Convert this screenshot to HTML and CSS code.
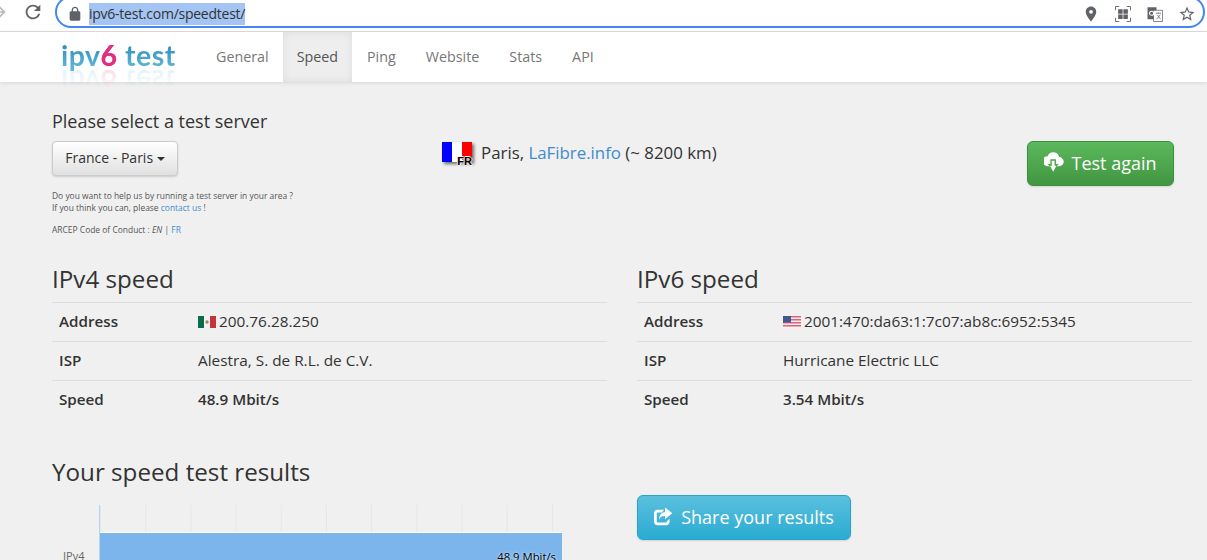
FILE: index.html
```html
<!DOCTYPE html>
<html lang="en">
<head>
  <meta charset="UTF-8" />
  <title>IPv6 speed test</title>
  <link rel="stylesheet" href="styles.css">
</head>
<body>
  <div class="toolbar">
    <svg class="tool-back" viewBox="0 0 24 24"><path d="M12 4l-1.41 1.41L16.17 11H4v2h12.17l-5.58 5.59L12 20l8-8z"/></svg>
    <svg class="tool-reload" viewBox="0 0 24 24"><path d="M17.65 6.35A7.958 7.958 0 0 0 12 4c-4.42 0-7.99 3.58-7.99 8s3.57 8 7.99 8c3.73 0 6.84-2.55 7.73-6h-2.08A5.99 5.99 0 0 1 12 18c-3.31 0-6-2.69-6-6s2.69-6 6-6c1.66 0 3.14.69 4.22 1.78L13 11h7V4l-2.35 2.35z"/></svg>
    <div class="omnibox">
      <svg class="tool-lock" viewBox="0 0 24 24"><path d="M18 8h-1V6c0-2.76-2.24-5-5-5S7 3.24 7 6v2H6c-1.1 0-2 .9-2 2v10c0 1.1.9 2 2 2h12c1.1 0 2-.9 2-2V10c0-1.1-.9-2-2-2zM9 6c0-1.66 1.34-3 3-3s3 1.34 3 3v2H9V6z"/></svg>
      <span class="url">ipv6-test.com/speedtest/</span>
      <div class="omni-icons">
        <svg viewBox="0 0 24 24"><path d="M12 2C8.13 2 5 5.13 5 9c0 5.25 7 13 7 13s7-7.75 7-13c0-3.87-3.13-7-7-7zm0 9.5a2.5 2.5 0 1 1 0-5 2.5 2.500 0 0 1 0 5z"/></svg>
        <svg viewBox="0 0 24 24"><path d="M2 7V2h5M17 2h5v5M22 17v5h-5M7 22H2v-5" fill="none" stroke="#5f6368" stroke-width="1.200"/><path d="M5.500 5.500h6v6h-6zM12.500 5.500h6v6h-6zM5.500 12.500h6v6h-6zM12.500 12.500h6v6h-6z"/></svg>
        <svg viewBox="0 0 24 24"><path d="M2 3h12v16H2z"/><path d="M10 7h12v15H10z" fill="#fff" stroke="#5f6368"/><circle cx="7.500" cy="11" r="2.800" fill="none" stroke="#fff" stroke-width="1.400"/><path d="M13 11h7M16.500 10v1.500M14 19l5-6M15 13l4.500 6" fill="none" stroke="#5f6368"/></svg>
        <svg viewBox="0 0 24 24"><path d="M22 9.240l-7.190-.62L12 2 9.190 8.630 2 9.240l5.460 4.730L5.820 21 12 17.270 18.180 21l-1.630-7.030L22 9.240zM12 15.400l-3.760 2.270 1-4.280-3.320-2.880 4.380-.38L12 6.100l1.710 4.040 4.380.38-3.320 2.880 1 4.280L12 15.400z"/></svg>
      </div>
    </div>
  </div>

  <nav class="navbar">
    <a class="logo">ipv<span class="logo-six">6</span> test</a>
    <a class="nav-item">General</a>
    <a class="nav-item active">Speed</a>
    <a class="nav-item">Ping</a>
    <a class="nav-item">Website</a>
    <a class="nav-item">Stats</a>
    <a class="nav-item">API</a>
  </nav>

  <main class="page">
    <section class="server-row">
      <div>
        <div class="server-title">Please select a test server</div>
        <button class="btn-server">France - Paris <span class="caret"></span></button>
        <p class="small-note">Do you want to help us by running a test server in your area ?<br>If you think you can, please <a>contact us</a> !</p>
        <p class="small-note">ARCEP Code of Conduct : <a class="lang-en">EN</a> | <a>FR</a></p>
      </div>
      <div class="server-info">
        <span class="flag-fr"><i class="blue"></i><i class="white"></i><i class="red"></i><b>FR</b></span>
        <span>Paris, <a>LaFibre.info</a> (~ 8200 km)</span>
      </div>
      <button class="btn-big btn-green">
        <svg viewBox="2 0 24 24"><path d="M18.500 5.500A6.500 6.500 0 0 0 6 4.500 5 5 0 0 0 6 15.500h12.500a5 5 0 0 0 0-10z"/><path d="M9 8h6v5h3l-6 7-6-7h3z" fill="#4aa44a"/><path d="M10.500 9.500h3V15h2L12 21.500 8.500 15h2z"/></svg>
        Test again
      </button>
    </section>

    <section class="two-cols">
      <div>
        <h2>IPv4 speed</h2>
        <div class="info-row"><b>Address</b><span><svg class="flag" viewBox="0 0 18 12"><path fill="#0b6b4f" d="M0 0h6v12H0z"/><path fill="#f2f2ee" d="M6 0h6v12H6z"/><path fill="#c8323f" d="M12 0h6v12h-6z"/><circle cx="9" cy="6" r="1.700" fill="#9a8a5a"/></svg>200.76.28.250</span></div>
        <div class="info-row"><b>ISP</b><span>Alestra, S. de R.L. de C.V.</span></div>
        <div class="info-row"><b>Speed</b><b>48.9 Mbit/s</b></div>
      </div>
      <div>
        <h2>IPv6 speed</h2>
        <div class="info-row"><b>Address</b><span><svg class="flag" viewBox="0 0 18 12"><path fill="#f4f0f0" d="M0 0h18v12H0z"/><path fill="#e0607a" d="M0 0h18v1.500H0zM0 3h18v1.500H0zM0 6h18v1.500H0zM0 9h18v1.500H0z"/><path fill="#3f5a8c" d="M0 0h8v6.500H0z"/></svg>2001:470:da63:1:7c07:ab8c:6952:5345</span></div>
        <div class="info-row"><b>ISP</b><span>Hurricane Electric LLC</span></div>
        <div class="info-row"><b>Speed</b><b>3.54 Mbit/s</b></div>
      </div>
    </section>

    <section class="two-cols results">
      <div>
        <h2 class="results-title">Your speed test results</h2>
        <div class="chart">
          <span class="chart-label">IPv4</span>
          <div class="chart-plot">
            <div class="chart-bar"><span>48.9 Mbit/s</span></div>
          </div>
        </div>
      </div>
      <div class="share-col">
        <button class="btn-big btn-blue">
          <svg viewBox="3 0 24 24"><path d="M14 4H7a4 4 0 0 0-4 4v9a4 4 0 0 0 4 4h9a4 4 0 0 0 4-4v-3l-3 2.500V17a1 1 0 0 1-1 1H7a1 1 0 0 1-1-1V8a1 1 0 0 1 1-1h4.500z"/><path d="M15 1.500L23 8l-8 6.500V11c-3.500 0-5.500 1.200-6.500 4 0-5 2.500-8 6.500-8.500z"/></svg>
          Share your results
        </button>
      </div>
    </section>
  </main>
</body>
</html>
```

FILE: styles.css
```css
html, body {
  height: 560px;
  overflow: hidden;
}

body {
  margin: 0;
  font-family: "Open Sans", sans-serif;
  font-size: 14px;
  color: #333;
  background-color: #f0f0f0;
}

a {
  color: #428bca;
}

/* browser toolbar */
.toolbar {
  display: flex;
  align-items: flex-start;
  height: 31px;
  background-color: #fff;
  border-bottom: 1px solid #ddd;
  overflow: hidden;
}

.toolbar svg {
  fill: #5f6368;
  flex-shrink: 0;
}

.tool-back {
  width: 20px;
  height: 20px;
  margin: 2px 0 0 -11px;
  fill: #b8bdb8 !important;
}

.tool-reload {
  width: 22px;
  height: 22px;
  margin: 1px 0 0 13px;
}

.omnibox {
  display: flex;
  align-items: center;
  box-sizing: border-box;
  width: 1150px;
  height: 32px;
  margin: -4px 0 0 11px;
  padding: 4px 7px 0 10px;
  border: 2px solid #4285f4;
  border-radius: 16px;
}

.tool-lock {
  width: 16px;
  height: 16px;
}

.url {
  margin-left: 6px;
  padding: 1px 0;
  font-size: 14px;
  line-height: 20px;
  color: #333;
  background-color: #a4c5f4;
  letter-spacing: -0.25px;
}

.omni-icons {
  display: flex;
  gap: 14px;
  margin-left: auto;
}

.omni-icons svg {
  width: 18px;
  height: 18px;
}

/* site nav */
.navbar {
  display: flex;
  align-items: stretch;
  height: 50px;
  padding-left: 61px;
  background-color: #fff;
  box-shadow: 0 1px 4px rgba(0, 0, 0, 0.1);
}

.logo {
  width: 140px;
  height: 46px;
  font-family: "Lato", sans-serif;
  font-weight: 700;
  font-size: 28.5px;
  line-height: 46px;
  letter-spacing: 0.5px;
  color: transparent;
  background-image: linear-gradient(#2f8fc0 30%, #5db4d6 75%);
  -webkit-background-clip: text;
  background-clip: text;
  -webkit-box-reflect: below -20px linear-gradient(transparent 35%, rgba(255, 255, 255, 0.16) 75%);
}

.logo-six {
  color: #f0287e;
}

.nav-item {
  padding: 0 15px;
  font-size: 14.3px;
  line-height: 50px;
  color: #777;
}

.nav-item:nth-child(2) {
  padding-right: 14px;
}

.nav-item.active {
  padding: 0 14px;
  color: #555;
  background-color: #eee;
  box-shadow: inset 0 0 8px rgba(0, 0, 0, 0.08);
}

/* page */
.page {
  padding: 29px 15px 0 52px;
}

.server-row {
  display: grid;
  grid-template-columns: 390px 585px 147px;
  align-items: start;
  height: 155px;
}

.server-title {
  font-size: 18px;
  line-height: 20px;
  margin-bottom: 10px;
}

.btn-server {
  display: block;
  height: 35px;
  width: 126px;
  padding: 0 0 2px;
  font-family: inherit;
  font-size: 14px;
  color: #333;
  background-image: linear-gradient(#fff, #e0e0e0);
  border: 1px solid #ccc;
  border-radius: 4px;
  box-shadow: 0 1px 2px rgba(0, 0, 0, 0.15);
}

.caret {
  display: inline-block;
  vertical-align: middle;
  border-top: 4px solid #333;
  border-left: 4px solid transparent;
  border-right: 4px solid transparent;
}

.small-note {
  margin: 14px 0 0;
  font-size: 8.45px;
  line-height: 12px;
  color: #555;
  white-space: nowrap;
}

.small-note + .small-note {
  margin-top: 10px;
}

.lang-en {
  font-style: italic;
  color: #555;
}

.server-info {
  display: flex;
  align-items: flex-start;
  gap: 9px;
  padding-top: 31px;
  font-size: 16.85px;
  line-height: 22px;
}

.flag-fr {
  position: relative;
  display: flex;
  width: 30px;
  height: 20px;
  box-shadow: 2px 2px 3px rgba(0, 0, 0, 0.55);
}

.flag-fr i {
  flex: 1;
}

.flag-fr .blue { background-color: #00f; }
.flag-fr .white { background-color: #fff; }
.flag-fr .red { background-color: #f00; }

.flag-fr b {
  position: absolute;
  right: 0;
  bottom: -4px;
  font-family: "Liberation Sans", sans-serif;
  font-size: 11px;
  line-height: 10px;
  color: #000;
  -webkit-text-stroke: 0.2px #000;
  text-shadow: 1px 0 0 #fff, -1px 0 0 #fff, 0 1px 0 #fff, 0 -1px 0 #fff;
}

.btn-big {
  display: flex;
  align-items: center;
  justify-content: center;
  gap: 5px;
  height: 45px;
  padding: 0 0 2px;
  font-family: inherit;
  font-size: 18px;
  color: #fff;
  border-radius: 6px;
  box-shadow: 0 1px 2px rgba(0, 0, 0, 0.12);
}

.btn-big svg {
  fill: #fff;
  width: 22px;
  height: 22px;
}

.btn-green {
  width: 147px;
  margin-top: 30px;
  background-image: linear-gradient(#5cb85c, #419641);
  border: 1px solid #3e8f3e;
}

.btn-blue {
  width: 214px;
  background-image: linear-gradient(#5bc0de, #2aabd2);
  border: 1px solid #28a4c9;
}

.two-cols {
  display: grid;
  grid-template-columns: 555px 555px;
  gap: 30px;
}

h2 {
  margin: 0;
  font-size: 24.2px;
  font-weight: 400;
  line-height: 26px;
  padding-bottom: 10px;
  border-bottom: 1px solid #ddd;
}

.info-row {
  display: grid;
  grid-template-columns: 139px 1fr;
  box-sizing: border-box;
  height: 39px;
  padding-left: 7px;
  font-size: 15.35px;
  line-height: 37px;
  border-bottom: 1px solid #ddd;
}

.info-row:last-child {
  border-bottom: none;
}

.info-row b {
  font-size: 15.2px;
  font-weight: 600;
}

.flag {
  width: 18px;
  height: 12px;
  margin-right: 3px;
  vertical-align: -1px;
}

.results {
  margin-top: 39px;
}

.results-title {
  border-bottom: none;
  padding-bottom: 0;
}

.chart {
  display: flex;
  height: 55px;
  margin-top: 20px;
  overflow: hidden;
}

.chart-label {
  box-sizing: border-box;
  width: 47px;
  padding: 44px 0 0 11px;
  font-size: 11px;
  line-height: 14px;
  color: #666;
}

.chart-plot {
  box-sizing: border-box;
  width: 498px;
  padding-top: 27px;
  border-left: 1px solid #b8d4f0;
  background-image: linear-gradient(to right, #e6e6e6 1px, transparent 1px);
  background-size: 45.2px 100%;
}

.chart-bar {
  display: flex;
  justify-content: flex-end;
  width: 462px;
  height: 28px;
  padding-top: 16px;
  box-sizing: border-box;
  background-color: #7cb4ec;
  border-top: 1px solid #fff;
}

.chart-bar span {
  padding-right: 6px;
  font-size: 11.3px;
  line-height: 16px;
  color: #000;
  text-shadow: 0 0 3px #fff;
}

.share-col {
  padding-top: 36px;
}
```
